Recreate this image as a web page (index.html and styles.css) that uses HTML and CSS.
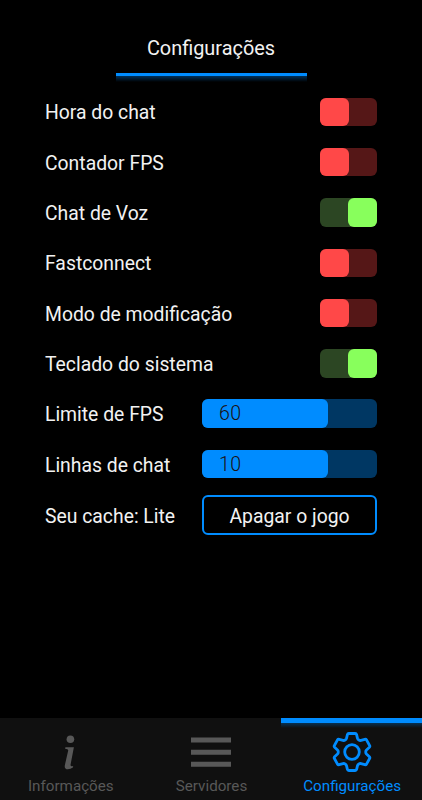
FILE: index.html
```html
<!doctype html>
<html lang="pt">
<head>
<meta charset="utf-8">
<title>Configurações</title>
<link rel="stylesheet" href="styles.css">
</head>

<body>
<div class="app">
	<div class="title">Configurações</div>
	<div class="line"></div>
	<div class="settings">
		<div class="row"><span>Hora do chat</span><div class="switch"><i></i></div></div>
		<div class="row"><span>Contador FPS</span><div class="switch"><i></i></div></div>
		<div class="row"><span>Chat de Voz</span><div class="switch on"><i></i></div></div>
		<div class="row"><span>Fastconnect</span><div class="switch"><i></i></div></div>
		<div class="row"><span>Modo de modificação</span><div class="switch"><i></i></div></div>
		<div class="row"><span>Teclado do sistema</span><div class="switch on"><i></i></div></div>
		<div class="row"><span>Limite de FPS</span><div class="slider"><div class="bar" style="width:72%">60</div></div></div>
		<div class="row"><span>Linhas de chat</span><div class="slider"><div class="bar" style="width:72%">10</div></div></div>
		<div class="row last"><span>Seu cache: Lite</span><a href="javascript:;" class="btn">Apagar o jogo</a></div>
	</div>
	<div class="nav">
		<a href="javascript:;" class="tab">
			<svg class="icon" width="40" height="40" viewBox="0 0 40 40">
				<circle cx="20.4" cy="7.3" r="3.8" fill="currentColor"/>
				<path d="M15.4 15.2H23.9L20.6 32.4Q20.2 34.8 23.2 33.9L22.9 35.4Q20.5 37.2 17.8 37.2Q14 37.2 14.9 32.9L18.2 18.6Q18.5 17 15.1 16.8Z" fill="currentColor"/>
			</svg>
			<span>Informações</span>
		</a>
		<a href="javascript:;" class="tab">
			<svg class="icon" width="40" height="40" viewBox="0 0 40 40">
				<path d="M0 5.4H40V10.4H0ZM0 17.7H40V22.7H0ZM0 29.8H40V34.8H0Z" fill="currentColor"/>
			</svg>
			<span>Servidores</span>
		</a>
		<a href="javascript:;" class="tab active">
			<svg class="icon" width="40" height="40" viewBox="-20 -20 40 40" fill="none" stroke="currentColor" stroke-width="2.8" stroke-linejoin="round">
				<path d="M-3.2 -18.5H3.2Q4.3 -18.5 4.6 -17.4L5.5 -13.6Q5.8 -12.6 6.9 -12Q7.9 -11.3 9 -11.6L12.8 -12.7Q13.9 -13 14.5 -12.1L17.6 -6.5Q18.2 -5.5 17.4 -4.7L14.5 -2Q13.7 -1.2 13.7 0Q13.7 1.2 14.5 2L17.4 4.7Q18.2 5.5 17.6 6.5L14.5 12.1Q13.9 13 12.8 12.7L9 11.6Q7.9 11.3 6.9 12Q5.8 12.6 5.5 13.6L4.6 17.4Q4.3 18.5 3.2 18.5H-3.2Q-4.3 18.5 -4.6 17.4L-5.5 13.6Q-5.8 12.6 -6.9 12Q-7.9 11.3 -9 11.6L-12.8 12.7Q-13.9 13 -14.5 12.1L-17.6 6.5Q-18.2 5.5 -17.4 4.7L-14.5 2Q-13.7 1.2 -13.7 0Q-13.7 -1.2 -14.5 -2L-17.4 -4.7Q-18.2 -5.5 -17.6 -6.5L-14.5 -12.1Q-13.9 -13 -12.8 -12.7L-9 -11.6Q-7.9 -11.3 -6.9 -12Q-5.8 -12.6 -5.5 -13.6L-4.6 -17.4Q-4.3 -18.5 -3.2 -18.5Z"/>
				<circle r="7.3"/>
			</svg>
			<span>Configurações</span>
		</a>
	</div>
</div>
</body>
</html>
```

FILE: styles.css
```css
*{margin:0; padding:0; box-sizing:border-box;}
body{background:#000; color:#f2f2f2; font:19.35px/28px Roboto, "Liberation Sans", sans-serif;}
a{color:inherit; text-decoration:none;}
.app{display:flex; flex-direction:column; height:800px; overflow:hidden;}

.title{height:73px; padding-top:35px; font-size:19.9px; text-align:center;}
.line{width:191px; height:9px; margin:0 auto; border-top:3px solid #008cff; background:linear-gradient(#003058,#000);}

.settings{flex:1; display:flex; flex-direction:column; gap:21.8px; padding:15.7px 45px 0;}
.row{display:flex; justify-content:space-between; align-items:center; height:28.5px; white-space:nowrap;}
.row span{padding-top:3px;}
.switch{width:57px; height:28.5px; border-radius:6px; background:#551717; display:flex;}
.switch i{width:29px; height:100%; border-radius:6px; background:#ff4848;}
.switch.on{background:#2c4623; justify-content:flex-end;}
.switch.on i{background:#88ff5c;}
.slider{width:175px; height:28.5px; border-radius:6px; background:#003763;}
.bar{height:100%; padding-left:17px; border-radius:6px; background:#008cff; color:#1c1010; font-size:19.6px; font-weight:300; line-height:30px; letter-spacing:.4px;}
.last{height:40px; margin-top:-5px;}
.btn{width:175px; height:40px; line-height:39px; border:2px solid #008cff; border-radius:6px; text-align:center;}

.nav{display:flex; height:82px; background:#101010;}
.tab{flex:1; display:flex; flex-direction:column; align-items:center; padding-top:14px; color:#585858; font-size:15.2px; line-height:20px;}
.tab span{margin-top:4px; padding-left:1px;}
.tab.active{padding-top:0; color:#008cff;}
.tab.active:before{content:""; width:100%; height:5px; margin-bottom:4px; border-top:5px solid #008cff; background:linear-gradient(#073153,#101010);}
```
